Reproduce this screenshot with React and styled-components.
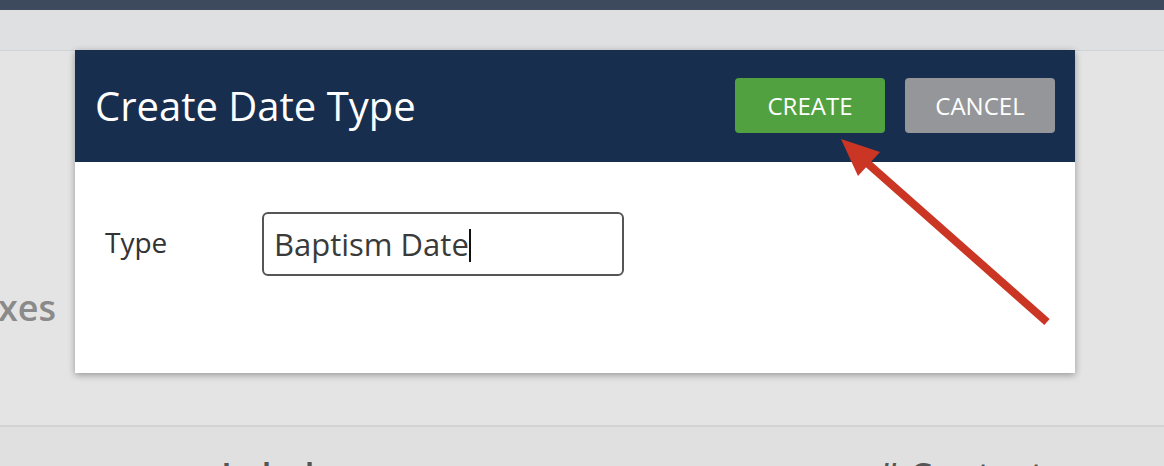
import React from "react";
import styled, { createGlobalStyle } from "styled-components";

const Global = createGlobalStyle`
  html, body { margin: 0; padding: 0; }
  body {
    background: #e4e4e4;
    font-family: "Open Sans", "Noto Sans", sans-serif;
    overflow: hidden;
    width: 1164px;
    height: 466px;
  }
`;

const Page = styled.div`
  position: relative;
  width: 1164px;
  height: 466px;
  overflow: hidden;
  display: flex;
  flex-direction: column;
`;

const TopBar = styled.div`
  flex-shrink: 0;
  height: 10px;
  background: #3d4a5e;
`;

const SubBar = styled.div`
  flex-shrink: 0;
  height: 40px;
  background: #dfe0e2;
  border-bottom: 1px solid #d2d3d5;
`;

const Content = styled.div`
  flex-shrink: 0;
  display: flex;
  flex-direction: column;
`;

const Section = styled.div`
  flex-shrink: 0;
  height: 376px;
  display: flex;
  align-items: flex-start;
  padding-top: 239px;
  box-sizing: border-box;
  border-bottom: 2px solid #d2d2d2;
`;

const FadedHeading = styled.div`
  font-size: 36px;
  font-weight: 600;
  color: #8a8a8a;
  line-height: 1;
  margin-left: -2px;
`;

const TableHead = styled.div`
  flex-shrink: 0;
  display: flex;
  padding-top: 31px;
  height: 80px;
  background: #e0e0e0;
  white-space: nowrap;
`;

const HeadCell = styled.div`
  font-size: 36px;
  font-weight: 600;
  color: #555;
  line-height: 1;
  margin-left: ${(p) => p.$ml}px;
`;

const Modal = styled.div`
  position: absolute;
  left: 75px;
  top: 50px;
  width: 1000px;
  height: 323px;
  background: #fff;
  box-shadow: 0 2px 7px rgba(0, 0, 0, 0.35);
  display: flex;
  flex-direction: column;
`;

const ModalHeader = styled.div`
  flex-shrink: 0;
  height: 112px;
  background: #172e4e;
  display: flex;
  align-items: center;
  padding: 0 20px 0 20px;
  box-sizing: border-box;
`;

const Title = styled.h2`
  margin: 0;
  flex: 1;
  color: #fff;
  font-size: 40px;
  font-weight: 400;
  line-height: 1;
`;

const Button = styled.button`
  width: 150px;
  height: 55px;
  margin-left: ${(p) => (p.$first ? 0 : 20)}px;
  margin-top: -2px;
  border: none;
  border-radius: 4px;
  background: ${(p) => p.$bg};
  color: #fff;
  font-family: "Open Sans", sans-serif;
  font-size: 24px;
  font-weight: 400;
  text-transform: uppercase;
  padding: 0;
`;

const ModalBody = styled.div`
  display: flex;
  align-items: center;
  padding: 50px 0 0 30px;
`;

const Label = styled.label`
  width: 157px;
  font-size: 28px;
  color: #333;
  margin-top: -4px;
`;

const Input = styled.div`
  width: 362px;
  height: 64px;
  box-sizing: border-box;
  border: 2px solid #555;
  border-radius: 6px;
  display: flex;
  align-items: center;
  padding-left: 10px;
  font-size: 31px;
  color: #3a3a3a;
`;

const Caret = styled.span`
  display: inline-block;
  width: 2px;
  height: 33px;
  background: #111;
  margin-top: 2px;
`;

const ArrowSvg = styled.svg`
  position: absolute;
  left: 0;
  top: 0;
  pointer-events: none;
`;

export default function App() {
  return (
    <>
      <Global />
      <Page>
        <TopBar />
        <SubBar />
        <Content>
          <Section>
            <FadedHeading>xes</FadedHeading>
          </Section>
          <TableHead>
            <HeadCell $ml={221}>Label</HeadCell>
            <HeadCell $ml={562}># Contacts</HeadCell>
          </TableHead>
        </Content>
        <Modal>
          <ModalHeader>
            <Title>Create Date Type</Title>
            <Button $first $bg="#52a141">Create</Button>
            <Button $bg="#959699">Cancel</Button>
          </ModalHeader>
          <ModalBody>
            <Label>Type</Label>
            <Input>
              Baptism Date
              <Caret />
            </Input>
          </ModalBody>
        </Modal>
        <ArrowSvg width="1164" height="466" viewBox="0 0 1164 466">
          <line x1="1047" y1="322" x2="866" y2="162" stroke="#cb3523" strokeWidth="8" />
          <polygon points="841,139 880,152 858,176" fill="#cb3523" />
        </ArrowSvg>
      </Page>
    </>
  );
}
